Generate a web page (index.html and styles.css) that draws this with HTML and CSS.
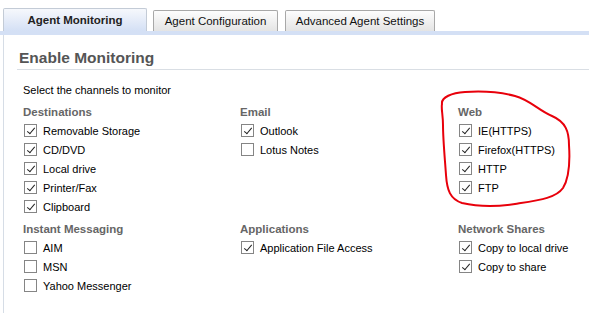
FILE: index.html
```html
<!DOCTYPE html>
<html>
<head>
<meta charset="utf-8">
<link rel="stylesheet" href="styles.css">
</head>
<body>
<div class="page">
  <div class="tabs">
    <div class="tab active">Agent Monitoring</div>
    <div class="tab t2">Agent Configuration</div>
    <div class="tab t3">Advanced Agent Settings</div>
  </div>
  <div class="panel">
    <h1 class="title">Enable Monitoring</h1>
    <p class="intro">Select the channels to monitor</p>
    <div class="grid">
      <div class="group">
        <div class="gh">Destinations</div>
        <label class="item"><span class="cb on"></span>Removable Storage</label>
        <label class="item"><span class="cb on"></span>CD/DVD</label>
        <label class="item"><span class="cb on"></span>Local drive</label>
        <label class="item"><span class="cb on"></span>Printer/Fax</label>
        <label class="item"><span class="cb on"></span>Clipboard</label>
      </div>
      <div class="group">
        <div class="gh">Email</div>
        <label class="item"><span class="cb on"></span>Outlook</label>
        <label class="item"><span class="cb"></span>Lotus Notes</label>
      </div>
      <div class="group">
        <div class="gh">Web</div>
        <label class="item"><span class="cb on"></span>IE(HTTPS)</label>
        <label class="item"><span class="cb on"></span>Firefox(HTTPS)</label>
        <label class="item"><span class="cb on"></span>HTTP</label>
        <label class="item"><span class="cb on"></span>FTP</label>
      </div>
      <div class="group">
        <div class="gh">Instant Messaging</div>
        <label class="item"><span class="cb"></span>AIM</label>
        <label class="item"><span class="cb"></span>MSN</label>
        <label class="item"><span class="cb"></span>Yahoo Messenger</label>
      </div>
      <div class="group">
        <div class="gh">Applications</div>
        <label class="item"><span class="cb on"></span>Application File Access</label>
      </div>
      <div class="group">
        <div class="gh">Network Shares</div>
        <label class="item"><span class="cb on"></span>Copy to local drive</label>
        <label class="item"><span class="cb on"></span>Copy to share</label>
      </div>
    </div>
  </div>
  <svg class="scribble" width="589" height="313" viewBox="0 0 589 313">
    <path d="M442 104 C441 97 452 93 465 92 C480 91 500 92 515 96 C530 100 538 110 552 116 C566 122 569 132 569 145 C570 160 569 178 563 188 C556 198 540 200 515 204 C495 207 475 206 462 203 C450 199 447 190 446 175 C445 160 443 140 443 125 C443 115 441 108 442 104 Z" fill="none" stroke="#e8000b" stroke-width="2" stroke-linecap="round"/>
  </svg>
</div>
</body>
</html>
```

FILE: styles.css
```css
html, body {
  margin: 0;
  padding: 0;
  background: #ffffff;
}
.page {
  position: relative;
  width: 589px;
  height: 313px;
  overflow: hidden;
  font-family: "Liberation Sans", Arial, sans-serif;
  font-size: 11px;
  color: #000;
}
.tabs {
  display: flex;
  align-items: flex-end;
  gap: 6px;
  padding: 8px 0 0 3px;
  border-bottom: 4px solid #d4e0f5;
  height: 23px;
}
.tab {
  box-sizing: border-box;
  height: 21px;
  border: 1px solid #a8a8a8;
  border-bottom: none;
  border-radius: 2px 2px 0 0;
  background: linear-gradient(#fdfdfd, #e4e4e4);
  display: flex;
  align-items: center;
  justify-content: center;
  font-size: 11.5px;
  color: #111;
}
.tab.active {
  width: 144px;
  height: 23px;
  border-color: #c3cbd6;
  background: linear-gradient(#f6f8fc, #d4e0f5);
  font-weight: bold;
  color: #222;
}
.tab.t2 { width: 125px; }
.tab.t3 { width: 150px; margin-left: 1px; }
.panel {
  margin-left: 3px;
  border-left: 1px solid #d6dde6;
  height: 278px;
  padding: 12px 0 0 0;
}
.title {
  margin: 0 0 0 13px;
  padding-left: 2px;
  font-size: 15.5px;
  line-height: 22px;
  font-weight: bold;
  color: #555;
  border-bottom: 1px solid #d9dee4;
}
.intro {
  margin: 13px 0 0 19px;
  line-height: 14px;
}
.grid {
  display: grid;
  grid-template-columns: 217px 218px 1fr;
  row-gap: 4px;
  margin: 6px 0 0 19px;
}
.group {
  display: flex;
  flex-direction: column;
}
.gh {
  font-weight: bold;
  color: #666;
  line-height: 18px;
  font-size: 11.5px;
}
.item {
  display: flex;
  align-items: center;
  gap: 6px;
  height: 19px;
  padding-left: 1px;
}
.cb {
  box-sizing: border-box;
  width: 13px;
  height: 13px;
  border: 1px solid #858585;
  background: #fff;
  position: relative;
  flex: none;
}
.cb.on::after {
  content: "";
  position: absolute;
  left: 3.5px;
  top: 0.5px;
  width: 3px;
  height: 7px;
  border-right: 1.7px solid #222;
  border-bottom: 1.7px solid #222;
  transform: rotate(40deg);
}
.scribble {
  position: absolute;
  left: 0;
  top: 0;
  pointer-events: none;
}
```
